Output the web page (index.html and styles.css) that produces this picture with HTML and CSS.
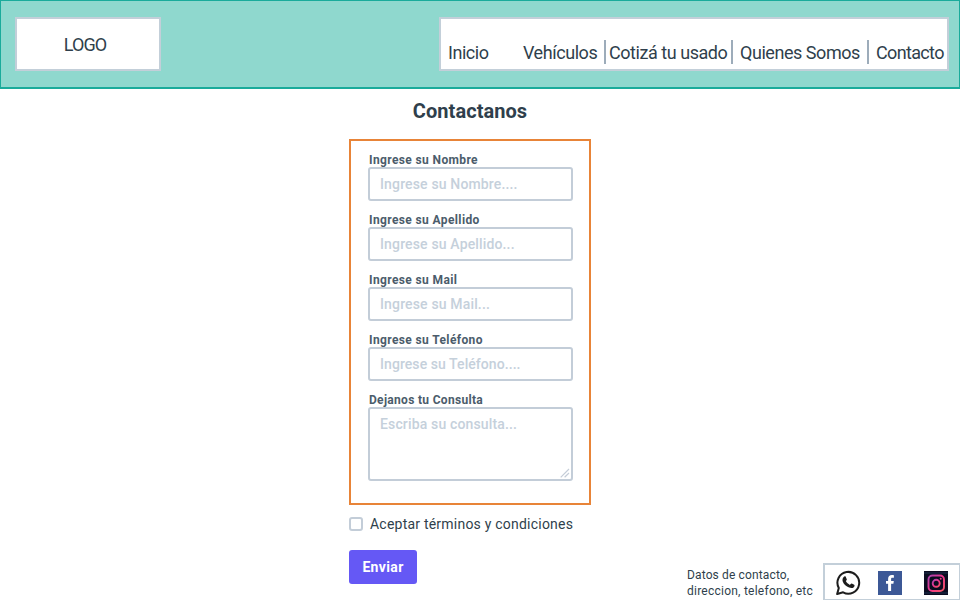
FILE: index.html
```html
<!DOCTYPE html>
<html lang="es">
<head>
<meta charset="utf-8">
<title>Contactanos</title>
<link rel="stylesheet" href="styles.css">
</head>
<body>
<header class="header">
  <div class="logo"><span>LOGO</span></div>
  <nav class="nav">
    <a class="item inicio">Inicio</a>
    <a class="item vehiculos">Vehículos</a>
    <a class="item cotiza">Cotizá tu usado</a>
    <a class="item quienes">Quienes Somos</a>
    <a class="item contacto">Contacto</a>
  </nav>
</header>
<main class="main">
  <h1 class="title">Contactanos</h1>
  <form>
    <div class="panel">
      <label class="field"><span class="label">Ingrese su Nombre</span><span class="control"><span class="hint">Ingrese su Nombre....</span></span></label>
      <label class="field"><span class="label">Ingrese su Apellido</span><span class="control"><span class="hint">Ingrese su Apellido...</span></span></label>
      <label class="field"><span class="label">Ingrese su Mail</span><span class="control"><span class="hint">Ingrese su Mail...</span></span></label>
      <label class="field"><span class="label">Ingrese su Teléfono</span><span class="control"><span class="hint phone">Ingrese su Teléfono....</span></span></label>
      <label class="field"><span class="label query">Dejanos tu Consulta</span><span class="control area"><span class="hint">Escriba su consulta...</span>
        <svg class="grip" width="10" height="10" viewBox="0 0 10 10"><path d="M.7 9.3 9 1M4.6 9.3 9 5"/></svg></span></label>
    </div>
    <label class="terms"><span class="check"></span><span>Aceptar términos y condiciones</span></label>
    <button class="send" type="button"><span>Enviar</span></button>
  </form>
</main>
<footer class="footer">
  <p class="info"><span>Datos de contacto,</span><br><span class="line2">direccion, telefono, etc</span></p>
  <div class="social">
    <svg class="whatsapp" width="25" height="25" viewBox="0 0 26 26"><path d="M1.200 25 2.900 18.700A11.300 11.300 0 1 1 7.400 23.200Z" fill="#fff" stroke="#1d1d1d" stroke-width="2.100" stroke-linejoin="round"/><path d="M8.600 6.800c.5-.4 1.200-.4 1.500.2l1.100 2.500c.3.8-.6 1.400-1 2 .9 1.800 2.400 3.100 4.300 4 .6-.5 1.100-1.700 1.900-1.400l2.500 1.200c.8.5.2 2-.4 2.600-1.300 1.200-3.100 1.100-4.900.4-3-1.200-5.300-3.300-6.500-6.100-.8-2-.2-4.300 1.500-5.400Z" fill="#1d1d1d"/></svg>
    <svg class="facebook" width="24" height="24" viewBox="0 0 24 24"><path d="M0 0h24v24H0z" fill="#3c5896"/><path d="M10.100 20v-7.200H8V10h2.100V8c0-2.600 1.500-3.900 3.800-3.900.8 0 1.400.1 2 .2v2.400h-1.400c-1.100 0-1.400.5-1.400 1.400V10h2.700l-.4 2.800h-2.300V20Z" fill="#fff"/></svg>
    <svg width="24" height="24" viewBox="0 0 24 24"><defs><linearGradient id="ig" x1="0" y1="0" x2="1" y2="1"><stop offset="0" stop-color="#a743ae"/><stop offset=".5" stop-color="#f0358b"/><stop offset="1" stop-color="#f35564"/></linearGradient></defs><path d="M0 0h24v24H0z" fill="#0b0c20"/><path d="M0 2h24M0 22h24" stroke="#17243f" stroke-width="1.500"/><g fill="none" stroke="url(#ig)" stroke-width="1.900"><rect x="4.500" y="4.500" width="15.500" height="15.500" rx="4"/><circle cx="12.200" cy="12.300" r="3.500"/></g><circle cx="16.700" cy="7.800" r="1" fill="#ef438f"/></svg>
  </div>
</footer>
</body>
</html>
```
FILE: styles.css
```css
* { box-sizing: border-box; }
body {
  margin: 0;
  width: 960px;
  height: 600px;
  overflow: hidden;
  display: flex;
  flex-direction: column;
  background: #fff;
  color: #2f3f4c;
  font-family: Roboto, "Liberation Sans", sans-serif;
}
.header {
  height: 89px;
  flex: none;
  display: flex;
  justify-content: space-between;
  align-items: flex-start;
  padding: 16px 10px 0 14px;
  background: #8fd8ce;
  border: 1px solid #1aab9b;
  border-bottom-width: 2px;
}
.logo, .nav { height: 54px; border: 2px solid #c3cfd9; background: #fff; display: flex; }
.logo { width: 146px; justify-content: center; font-size: 18px; line-height: 51px; padding-right: 6px; letter-spacing: -.9px; }
.nav { width: 510px; padding-top: 21px; }
.item { height: 24px; line-height: 25px; font-size: 18px; letter-spacing: -.45px; white-space: nowrap; padding-left: 7px; }
.inicio { width: 74px; }
.vehiculos { width: 91px; padding-left: 8px; border-right: 2px solid #9dacba; }
.cotiza { width: 127px; padding-left: 3px; border-right: 2px solid #9dacba; }
.quienes { width: 136px; border-right: 2px solid #9dacba; }
.contacto { width: 78px; letter-spacing: -.65px; }
.main { width: 242px; margin-left: 349px; height: 474px; flex: none; }
.title { margin: 10px 0 16px; font-size: 20px; line-height: 24px; font-weight: 700; text-align: center; white-space: nowrap; letter-spacing: .05px; }
.panel { height: 366px; border: 2px solid #e88438; padding: 11px 16px 0 17px; }
.field { display: block; height: 60px; white-space: nowrap; }
.label { display: block; height: 15px; line-height: 16px; padding-left: 1px; font-size: 12px; font-weight: 700; color: #4b5c6b; letter-spacing: .38px; }
.query { letter-spacing: .31px; }
.control { display: block; height: 34px; width: 205px; border: 2px solid #c3cdd8; border-radius: 3px; padding-left: 10px; font-size: 14px; line-height: 30px; font-weight: 500; color: #c5d0db; letter-spacing: .15px; position: relative; }
.phone { letter-spacing: .07px; }
.area { height: 74px; }
.grip { position: absolute; right: 1px; bottom: 1px; fill: none; stroke: #c5cdd8; stroke-width: 1.2; }
.terms { display: flex; align-items: center; gap: 7px; height: 18px; margin-top: 10px; font-size: 14px; letter-spacing: .22px; white-space: nowrap; }
.check { width: 14px; height: 14px; border: 2px solid #c3cdd8; border-radius: 3px; }
.send { display: block; width: 68px; height: 34px; margin-top: 17px; padding: 0; border: 0; border-radius: 3px; background: #6558f5; color: #fff; font: 700 14px/34px Roboto, sans-serif; letter-spacing: .35px; }
.footer { height: 38px; flex: none; display: flex; justify-content: flex-end; margin-right: -1px; }
.info { margin: 4px 0 0; width: 136px; font-size: 12px; line-height: 16px; letter-spacing: .14px; white-space: nowrap; }
.line2 { letter-spacing: .24px; }
.social { width: 138px; height: 38px; border: 2px solid #c3cfd9; padding: 6px 10px 0 11px; display: flex; align-items: flex-start; }
.whatsapp { margin-top: -1px; }
.facebook { margin: 0 22px 0 17px; }
```
